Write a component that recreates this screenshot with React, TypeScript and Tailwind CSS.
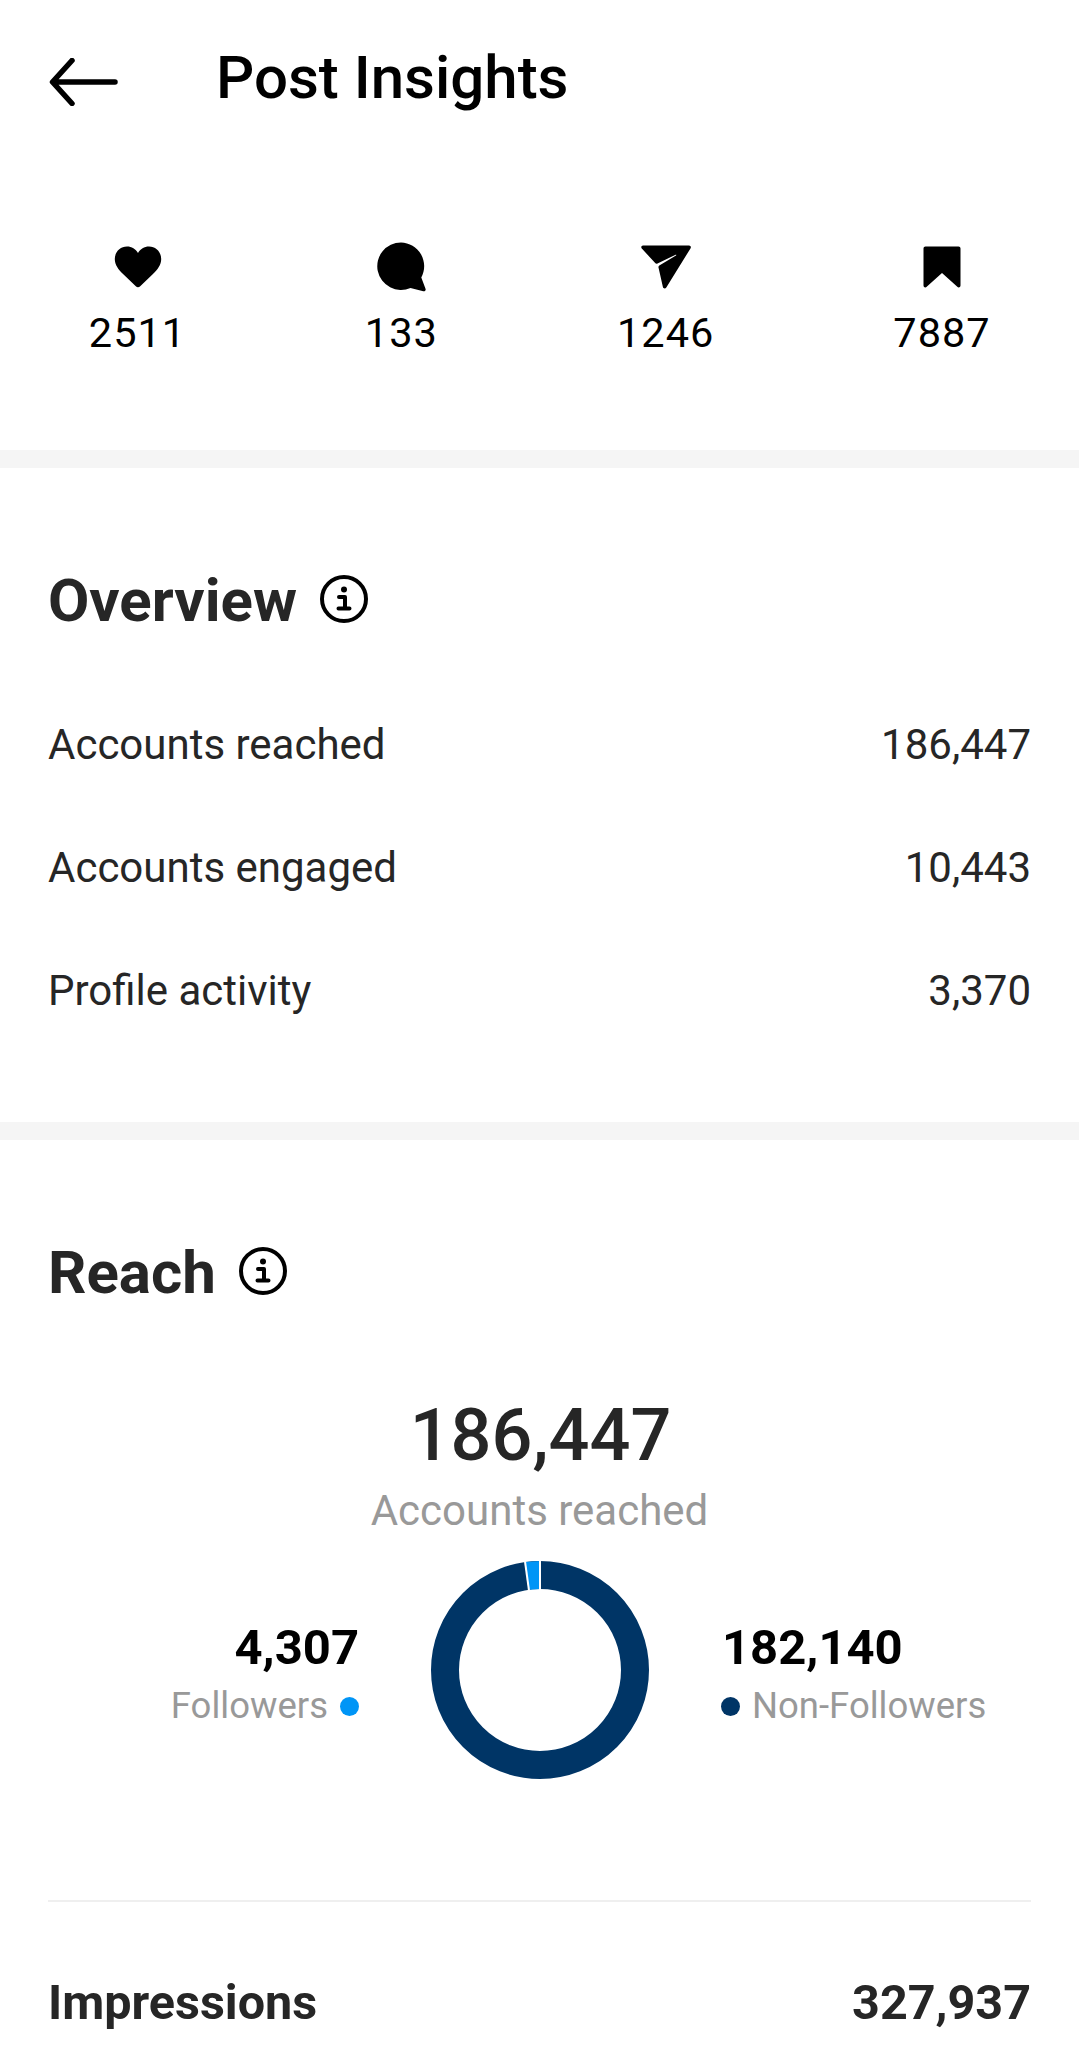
const rows = [
  { label: "Accounts reached", value: "186,447" },
  { label: "Accounts engaged", value: "10,443" },
  { label: "Profile activity", value: "3,370" },
];

function BackArrow() {
  return (
    <svg width="70" height="48" viewBox="0 0 70 48" fill="none" className="mt-[8px]">
      <path d="M23 2.500 3.500 24 23 45.500M4 24h62" stroke="#000" strokeWidth="5.500" strokeLinecap="round" strokeLinejoin="round" />
    </svg>
  );
}

function InfoIcon() {
  return (
    <svg width="48" height="48" viewBox="0 0 48 48" fill="none" className="-mt-[2px]">
      <circle cx="24" cy="24" r="22" stroke="#000" strokeWidth="4" />
      <circle cx="24" cy="14.5" r="3" fill="#000" />
      <path d="M19 22h6v11M18.5 33.5h11" stroke="#000" strokeWidth="4" strokeLinecap="round" strokeLinejoin="round" />
    </svg>
  );
}

function Heart() {
  return (
    <svg width="48" height="42" viewBox="0 0 48 42">
      <path d="M13 .5C6 .5.8 6 .8 13c0 6 3.600 10.500 8.500 15.300L21.800 40.300c1.300 1.200 3.100 1.200 4.400 0l12.500-12c4.900-4.800 8.500-9.300 8.500-15.300C47.200 6 42 .5 35 .5c-4.800 0-8.600 2.600-11 6.500C21.600 3.100 17.800.5 13 .5z" fill="#000" />
    </svg>
  );
}

function Bubble() {
  return (
    <svg width="50" height="50" viewBox="0 0 50 50">
      <path d="M24 .5a23.700 23.700 0 1 0 9.500 45.400l12.800 3.300c1.500.4 2.700-.9 2.300-2.300l-4.300-11.400A23.700 23.700 0 0 0 24 .5z" fill="#000" />
    </svg>
  );
}

function Send() {
  return (
    <svg width="50" height="44" viewBox="0 0 50 44">
      <path d="M2 .5h46c1.500 0 2.300 1.500 1.600 2.700L25.300 42.500c-.9 1.500-3 1.200-3.400-.5L17.500 22.500c-.2-.9.100-1.500.8-2L35 10.500c.6-.4.200-1-.4-.7L16.500 18.500c-.8.4-1.500.3-2.100-.2L.8 3.500C-.3 2.300.5.500 2 .5z" fill="#000" />
    </svg>
  );
}

function Bookmark() {
  return (
    <svg width="38" height="42" viewBox="0 0 38 42">
      <path d="M2.500 .5h33c1.200 0 2 .8 2 2v37c0 1.800-2 2.500-3.200 1.300L19 27 3.700 40.800C2.500 42 .5 41.300.5 39.500v-37c0-1.200.8-2 2-2z" fill="#000" />
    </svg>
  );
}

function Donut() {
  return (
    <svg width="220" height="220" viewBox="0 0 220 220">
      <circle cx="110" cy="110" r="95" fill="none" stroke="#003566" strokeWidth="28" />
      <path d="M95 2 L110 1 V29 L99 29.800 Z" fill="#0095f6" />
      <path d="M110 0 V30" stroke="#fff" strokeWidth="2" />
      <path d="M95 1.500 L99 30.500" stroke="#fff" strokeWidth="2" />
    </svg>
  );
}

export default function App() {
  return (
    <div className="w-[1079px] h-[2058px] overflow-hidden bg-white font-['Roboto',sans-serif]">
      {/* header */}
      <div className="flex h-[156px] items-center pl-[49px]">
        <BackArrow />
        <h1 className="ml-[97px] text-[60px] font-medium leading-none text-black">Post Insights</h1>
      </div>

      {/* stats */}
      <div className="flex h-[294px] justify-between px-[90px] pt-[86px] text-[41.5px] leading-[48px] tracking-[1px] text-black">
        <div className="flex w-[94px] flex-col items-center">
          <div className="ml-[2px] flex h-[50px] items-center"><Heart /></div>
          <span className="mt-[17px] ml-[1px]">2511</span>
        </div>
        <div className="flex w-[70px] flex-col items-center">
          <div className="ml-[2px] flex h-[50px] items-center"><Bubble /></div>
          <span className="mt-[17px]">133</span>
        </div>
        <div className="flex w-[94px] flex-col items-center">
          <div className="flex h-[50px] items-center"><Send /></div>
          <span className="mt-[17px]">1246</span>
        </div>
        <div className="flex w-[94px] flex-col items-center">
          <div className="flex h-[50px] items-center"><Bookmark /></div>
          <span className="mt-[17px]">7887</span>
        </div>
      </div>

      <div className="h-[18px] bg-[#f5f5f5]" />

      {/* overview */}
      <div className="h-[654px] px-[48px] pt-[102px] text-[#262626]">
        <div className="flex h-[60px] items-center gap-[23px]">
          <h2 className="mt-[2px] text-[60px] font-bold leading-none">Overview</h2>
          <InfoIcon />
        </div>
        <div className="mt-[91px] flex flex-col gap-[75px] text-[42px] leading-[48px]">
          {rows.map((r) => (
            <div key={r.label} className="flex justify-between">
              <span>{r.label}</span>
              <span>{r.value}</span>
            </div>
          ))}
        </div>
      </div>

      <div className="h-[18px] bg-[#f5f5f5]" />

      {/* reach */}
      <div className="px-[48px] pt-[102px]">
        <div className="flex h-[60px] items-center gap-[23px] text-[#262626]">
          <h2 className="mt-[2px] text-[60px] font-bold leading-none">Reach</h2>
          <InfoIcon />
        </div>
        <div className="mt-[93px] flex flex-col items-center">
          <div className="ml-[2px] -mt-[1px] text-[72px] font-medium leading-[84px] text-[#262626]">186,447</div>
          <div className="mt-[9px] text-[42px] leading-[48px] text-[#999999]">Accounts reached</div>
        </div>
        <div className="relative mt-[25px] flex h-[221px] justify-center">
          <Donut />
          <div className="absolute right-[672px] top-[61px] flex flex-col items-end whitespace-nowrap">
            <div className="text-[49px] font-bold leading-[54px] text-black">4,307</div>
            <div className="mt-[9px] flex items-center gap-[12px] text-[36.5px] leading-[44px] text-[#999999]">
              Followers
              <span className="h-[19px] w-[19px] rounded-full bg-[#0095f6]" />
            </div>
          </div>
          <div className="absolute left-[673px] top-[61px] flex flex-col items-start whitespace-nowrap">
            <div className="ml-[1px] text-[49px] font-bold leading-[54px] text-black">182,140</div>
            <div className="mt-[9px] flex items-center gap-[12px] text-[36.5px] leading-[44px] text-[#999999]">
              <span className="h-[19px] w-[19px] rounded-full bg-[#003566]" />
              Non-Followers
            </div>
          </div>
        </div>
        <div className="mt-[119px] h-[2px] bg-[#efefef]" />
        <div className="mt-[73px] flex justify-between text-[48.5px] font-bold leading-[56px] text-[#262626]">
          <span>Impressions</span>
          <span>327,937</span>
        </div>
      </div>
    </div>
  );
}
